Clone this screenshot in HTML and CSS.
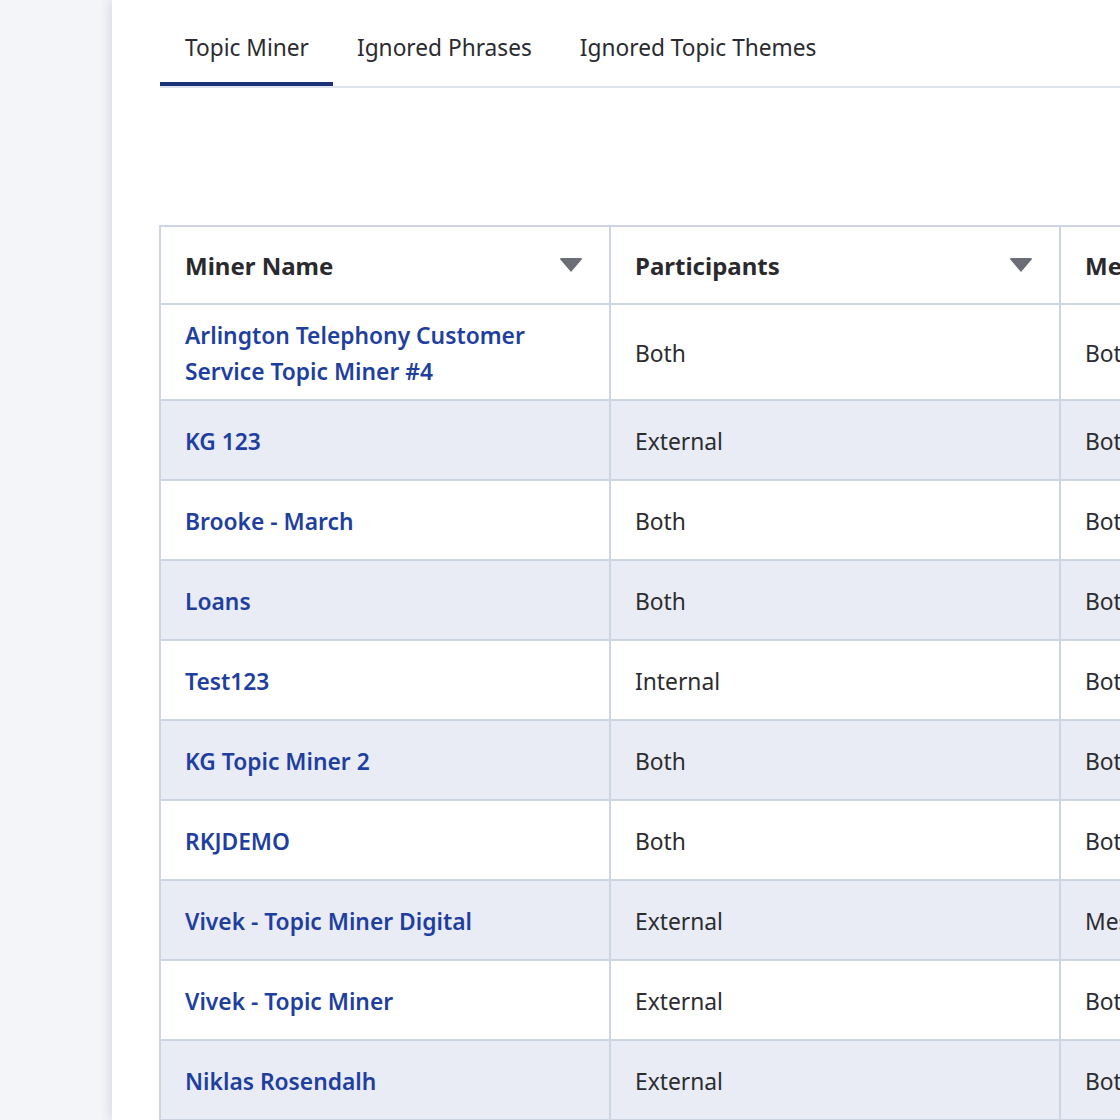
FILE: index.html
```html
<!DOCTYPE html>
<html lang="en">
<head>
    <meta charset="UTF-8">
    <meta name="viewport" content="width=device-width, initial-scale=1.0">
    <title>Topic Miner</title>
    <link rel="stylesheet" href="styles.css">
</head>
<body>
    <div class="layout">
        <!-- Barra lateral -->
        <div class="sidebar"></div>

        <div class="main">
            <div class="tabs">
                <div class="tab active">Topic Miner</div>
                <div class="tab">Ignored Phrases</div>
                <div class="tab">Ignored Topic Themes</div>
            </div>

            <div class="table-wrap">
                <table class="miners">
                    <thead>
                        <tr>
                            <th><div class="th-inner">Miner Name <span class="caret"></span></div></th>
                            <th><div class="th-inner">Participants <span class="caret"></span></div></th>
                            <th><div class="th-inner">Media Type <span class="caret"></span></div></th>
                        </tr>
                    </thead>
                    <tbody id="rows"></tbody>
                </table>
            </div>
        </div>
    </div>

    <script>
        const miners = [
            { name: 'Arlington Telephony Customer Service Topic Miner #4', participants: 'Both', media: 'Both', wrap: true },
            { name: 'KG 123', participants: 'External', media: 'Both' },
            { name: 'Brooke - March', participants: 'Both', media: 'Both' },
            { name: 'Loans', participants: 'Both', media: 'Both' },
            { name: 'Test123', participants: 'Internal', media: 'Both' },
            { name: 'KG Topic Miner 2', participants: 'Both', media: 'Both' },
            { name: 'RKJDEMO', participants: 'Both', media: 'Both' },
            { name: 'Vivek - Topic Miner Digital', participants: 'External', media: 'Messaging' },
            { name: 'Vivek - Topic Miner', participants: 'External', media: 'Both' },
            { name: 'Niklas Rosendalh', participants: 'External', media: 'Both' }
        ];

        const tbody = document.getElementById('rows');
        miners.forEach(m => {
            const tr = document.createElement('tr');
            if (m.wrap) tr.className = 'tall';
            tr.innerHTML = `
                <td><a href="#" class="miner-link">${m.name}</a></td>
                <td>${m.participants}</td>
                <td>${m.media}</td>
            `;
            tbody.appendChild(tr);
        });
    </script>
</body>
</html>
```

FILE: styles.css
```css
* {
    margin: 0;
    padding: 0;
    box-sizing: border-box;
}
body {
    font-family: 'Noto Sans', 'Open Sans', sans-serif;
    background-color: #f3f5f9;
    color: #2b2b2f;
    overflow: hidden;
}
.layout {
    display: flex;
    height: 100vh;
}
.sidebar {
    width: 112px;
    flex-shrink: 0;
    background-color: #f3f5f9;
}
.main {
    flex: 1;
    background-color: #fff;
    padding: 0 0 0 48px;
    box-shadow: -3px 0 10px rgba(30, 40, 70, 0.12);
    overflow: hidden;
    position: relative;
}
.tabs {
    display: flex;
    border-bottom: 2px solid #dfe3ee;
    height: 88px;
}
.tab {
    padding: 33px 24px 0 24px;
    font-size: 22.7px;
    line-height: 30px;
    color: #2b2b2f;
    border-bottom: 4px solid transparent;
    margin-bottom: -2px;
}
.tab:first-child {
    padding-left: 25px;
}
.tab.active {
    border-bottom-color: #1c3278;
    margin-bottom: 0;
    height: 86px;
}
.table-wrap {
    margin-top: 137px;
    width: 1200px;
}
.miners {
    border-collapse: collapse;
    table-layout: fixed;
    width: 1352px;
    margin-left: -1px;
}
.miners th, .miners td {
    border: 2px solid #cdd4e2;
    width: 450px;
    text-align: left;
    padding: 0 24px;
    font-size: 22.8px;
    vertical-align: middle;
}
.miners th {
    height: 78px;
    font-size: 24px;
    font-weight: 700;
    color: #2a2a2e;
}
.th-inner {
    display: flex;
    align-items: center;
    justify-content: space-between;
}
.caret {
    width: 0;
    height: 0;
    border-left: 12px solid transparent;
    border-right: 12px solid transparent;
    border-top: 14px solid #6b6e76;
    margin-right: 2px;
    border-radius: 3px;
}
.miners td {
    height: 80px;
    padding-top: 4px;
    line-height: 36px;
    color: #2c2c30;
}
.miners tr.tall td {
    height: 96px;
}
.miners tbody tr:nth-child(even) td {
    background-color: #e9ecf4;
}
.miner-link {
    color: #1f3fa0;
    font-weight: 600;
    text-decoration: none;
}
```
